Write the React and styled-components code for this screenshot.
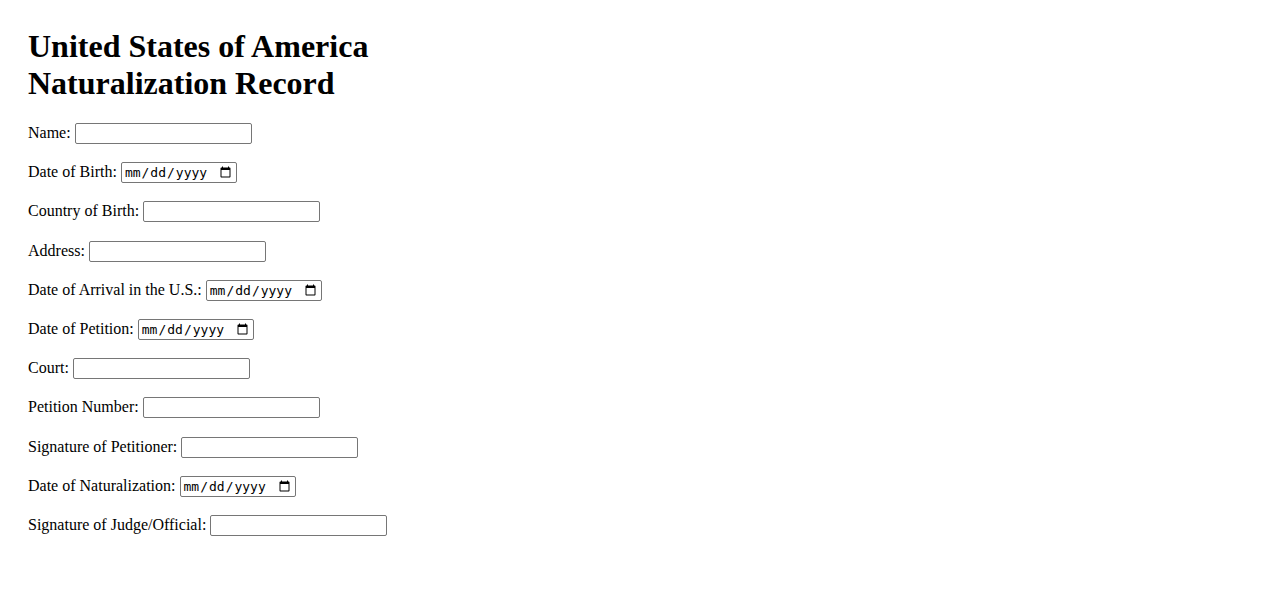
import React from 'react';
import styled, { createGlobalStyle } from 'styled-components';

const fields = [
  { label: 'Name', type: 'text' },
  { label: 'Date of Birth', type: 'date' },
  { label: 'Country of Birth', type: 'text' },
  { label: 'Address', type: 'text' },
  { label: 'Date of Arrival in the U.S.', type: 'date' },
  { label: 'Date of Petition', type: 'date' },
  { label: 'Court', type: 'text' },
  { label: 'Petition Number', type: 'text' },
  { label: 'Signature of Petitioner', type: 'text' },
  { label: 'Date of Naturalization', type: 'date' },
  { label: 'Signature of Judge/Official', type: 'text' },
];

function App() {
  return (
    <>
      <GlobalStyle />
      <Page>
        <Title>
          United States of America
          <br />
          Naturalization Record
        </Title>
        <form>
          {fields.map((f) => (
            <Row key={f.label}>
              <Label>{f.label}:</Label> <Field type={f.type} $date={f.type === 'date'} />
            </Row>
          ))}
        </form>
      </Page>
    </>
  );
}

export default App;

const GlobalStyle = createGlobalStyle`
  body {
    margin: 8px;
    background: #ffffff;
    color: #000000;
    font-family: "Liberation Serif", "Times New Roman", serif;
    font-size: 16px;
  }
`;

const Page = styled.div`
  padding: 20px;
`;

const Title = styled.h1`
  margin: 0 0 21px;
  font-size: 32px;
  font-weight: 700;
`;

const Row = styled.p`
  height: 21px;
  margin: 0 0 18.2px;
`;

const Label = styled.label``;

const Field = styled.input`
  box-sizing: border-box;
  width: ${(p) => (p.$date ? '116px' : '177px')};
  height: 21px;
  padding: 1px 2px;
  border: 1px solid #767676;
  border-radius: 2px;
  font-family: ${(p) => (p.$date ? '"DejaVu Sans Mono", monospace' : '"Liberation Sans", Arial, sans-serif')};
  font-size: 13px;
  background: #ffffff;
  vertical-align: baseline;
`;
